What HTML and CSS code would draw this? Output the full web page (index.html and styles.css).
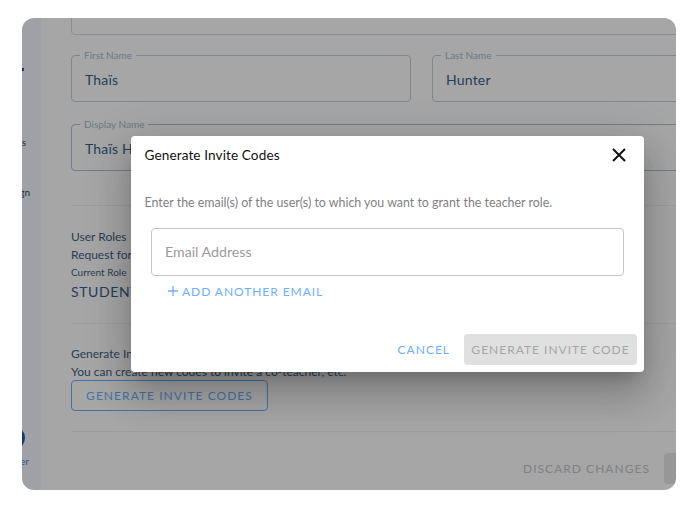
FILE: index.html
```html
<!DOCTYPE html>
<html lang="en">
<head>
<meta charset="utf-8">
<title>Generate Invite Codes</title>
<link rel="stylesheet" href="styles.css">
</head>
<body>
<div class="frame">
  <div class="page">
    <aside class="sidebar">
      <div class="nav-mark"></div>
      <div class="nav-item nav-settings">Settings</div>
      <div class="nav-item nav-design">Design</div>
      <div class="nav-ring"></div>
      <div class="nav-item nav-user">Teacher</div>
    </aside>
    <main class="main">
      <div class="field field-top"></div>
      <div class="field-grid">
        <div class="field"><span class="field-label">First Name</span><span class="field-value">Thaïs</span></div>
        <div class="field"><span class="field-label">Last Name</span><span class="field-value">Hunter</span></div>
        <div class="field field-wide"><span class="field-label">Display Name</span><span class="field-value">Thaïs Hunter</span></div>
      </div>
      <hr class="divider divider-a">
      <section class="roles">
        <p class="line">User Roles</p>
        <p class="line">Request for teacher role</p>
        <p class="line-small">Current Role</p>
        <p class="role">STUDENT</p>
      </section>
      <hr class="divider divider-b">
      <section class="codes">
        <p class="line">Generate Invite Codes</p>
        <p class="line">You can create new codes to invite a co-teacher, etc.</p>
        <button class="outline-btn" type="button">GENERATE INVITE CODES</button>
      </section>
      <hr class="divider divider-c">
      <div class="page-actions">
        <span class="discard">DISCARD CHANGES</span>
        <span class="save"></span>
      </div>
    </main>
  </div>
  <div class="overlay"></div>
  <div class="modal">
    <header class="modal-head">
      <h2 class="modal-title">Generate Invite Codes</h2>
      <svg class="close" viewBox="0 0 14 14" width="14" height="14" aria-label="Close"><path d="M1 1 13 13M13 1 1 13" fill="none" stroke="#111" stroke-width="2"/></svg>
    </header>
    <p class="modal-text">Enter the email(s) of the user(s) to which you want to grant the teacher role.</p>
    <div class="email-input">Email Address</div>
    <div class="add-email"><svg class="plus" viewBox="0 0 10 10" width="10" height="10" aria-hidden="true"><path d="M5 0V10M0 5H10" fill="none" stroke="#6eb0ff" stroke-width="1.3"/></svg><span>ADD ANOTHER EMAIL</span></div>
    <footer class="modal-actions">
      <span class="cancel">CANCEL</span>
      <span class="generate">GENERATE INVITE CODE</span>
    </footer>
  </div>
</div>
</body>
</html>
```

FILE: styles.css
```css
* { box-sizing: border-box; }
html, body { margin: 0; padding: 0; background: #fff; }
body { font-family: "Lato", "Open Sans", sans-serif; color: #1a3556; width: 698px; height: 508px; padding: 18px 22px; }

.frame { position: relative; width: 654px; height: 472px; border-radius: 12px; overflow: hidden; background: #fff; }
.page { display: flex; height: 100%; }

.sidebar { flex: 0 0 19px; min-width: 0; background: #f4f7ff; display: flex; flex-direction: column; align-items: flex-end; padding-right: 15px; font-size: 10px; color: #3a4a60; white-space: nowrap; }
.nav-mark { flex: none; margin-top: 50px; margin-right: 2.5px; width: 2px; height: 3px; background: #1a5fa8; }
.nav-item { flex: none; line-height: 12px; }
.nav-settings { margin-top: 65px; }
.nav-design { margin-top: 38px; margin-right: -4px; }
.nav-ring { flex: none; width: 24px; height: 24px; margin-top: 228px; margin-right: 1.5px; border-radius: 50%; border: 3px solid #1a5fa8; }
.nav-user { margin-top: 5px; margin-right: -3px; color: #4d86c0; }

.main { flex: 1 1 auto; min-width: 0; padding-left: 30px; overflow: hidden; }

.field { position: relative; height: 47px; border: 1px solid #c4cfda; border-radius: 4px; display: flex; align-items: center; padding-left: 13px; }
.field-top { margin-top: -30px; width: 640px; border-color: #d5dce5; }
.field-grid { display: grid; grid-template-columns: 340px 340px; column-gap: 21px; row-gap: 22px; margin-top: 20px; }
.field-wide { grid-column: 1 / span 2; border-color: #abc0d8; }
.field-label { position: absolute; left: 8px; top: -7px; padding: 0 4px; background: #fff; font-size: 10px; line-height: 12px; color: #a9bbd0; }
.field-value { font-size: 14px; color: #3a5f8a; letter-spacing: .2px; padding-top: 1px; }

.divider { margin: 0; border: 0; height: 1px; width: 640px; background: #f0f1f3; }
.divider-a { margin-top: 34px; }
.divider-b { margin-top: 21px; }
.divider-c { margin-top: 20px; }

.roles { padding-top: 22px; }
.codes { padding-top: 21px; }
.line { margin: 0; height: 18px; font-size: 12px; line-height: 18px; color: #3f5f83; }
.line-small { margin: 0; height: 16px; font-size: 10px; line-height: 16px; color: #3f5f83; }
.role { margin: 2px 0 0; font-size: 14px; line-height: 20px; letter-spacing: .6px; color: #3a5f8a; }

.outline-btn { display: block; margin-top: -1px; width: 197px; height: 31px; padding: 0; border: 1px solid #6eb0ff; border-radius: 4px; background: transparent; font: inherit; font-size: 12px; letter-spacing: 1.05px; color: #6eb0ff; }

.page-actions { display: flex; align-items: center; justify-content: flex-end; gap: 14px; height: 31px; margin-top: 21px; width: 623px; }
.discard { font-size: 12px; letter-spacing: 1.03px; color: #c4c6c9; }
.save { flex: none; width: 30px; height: 31px; border-radius: 4px; background: #e8e8e8; }

.overlay { position: absolute; inset: 0; background: rgba(0,0,0,.35); }

.modal { position: absolute; left: 109px; top: 118px; width: 513px; height: 236px; background: #fff; border-radius: 4px; box-shadow: 0 11px 15px -7px rgba(0,0,0,.2), 0 24px 38px 3px rgba(0,0,0,.14), 0 9px 46px 8px rgba(0,0,0,.12); display: flex; flex-direction: column; padding: 0 7px 0 0; }
.modal-head { display: flex; align-items: center; justify-content: space-between; height: 38px; padding: 0 11px 0 13.5px; }
.modal-title { margin: 0; font-size: 13.6px; font-weight: 400; color: #111; letter-spacing: .1px; }
.close { flex: none; }
.modal-text { margin: 21px 0 0 13.5px; height: 16px; font-size: 12.4px; line-height: 16px; color: #7f7f7f; white-space: nowrap; }
.email-input { margin: 17px 13px 0 20px; height: 48px; border: 1px solid #c4c4c4; border-radius: 4px; display: flex; align-items: center; padding: 0 0 1px 13px; font-size: 14.2px; color: #9a9a9a; }
.add-email { display: flex; align-items: center; gap: 4px; margin: 6px 0 0 37px; height: 18px; font-size: 12px; letter-spacing: .95px; color: #6eb0ff; }
.plus { flex: none; }
.modal-actions { display: flex; align-items: center; justify-content: flex-end; gap: 14px; margin-top: auto; margin-bottom: 7px; }
.cancel { font-size: 12px; letter-spacing: 1px; color: #6eb0ff; }
.generate { display: flex; align-items: center; justify-content: center; width: 173px; height: 31px; border-radius: 4px; background: #e0e0e0; font-size: 12px; letter-spacing: 1px; color: #a6a6a6; }
```
